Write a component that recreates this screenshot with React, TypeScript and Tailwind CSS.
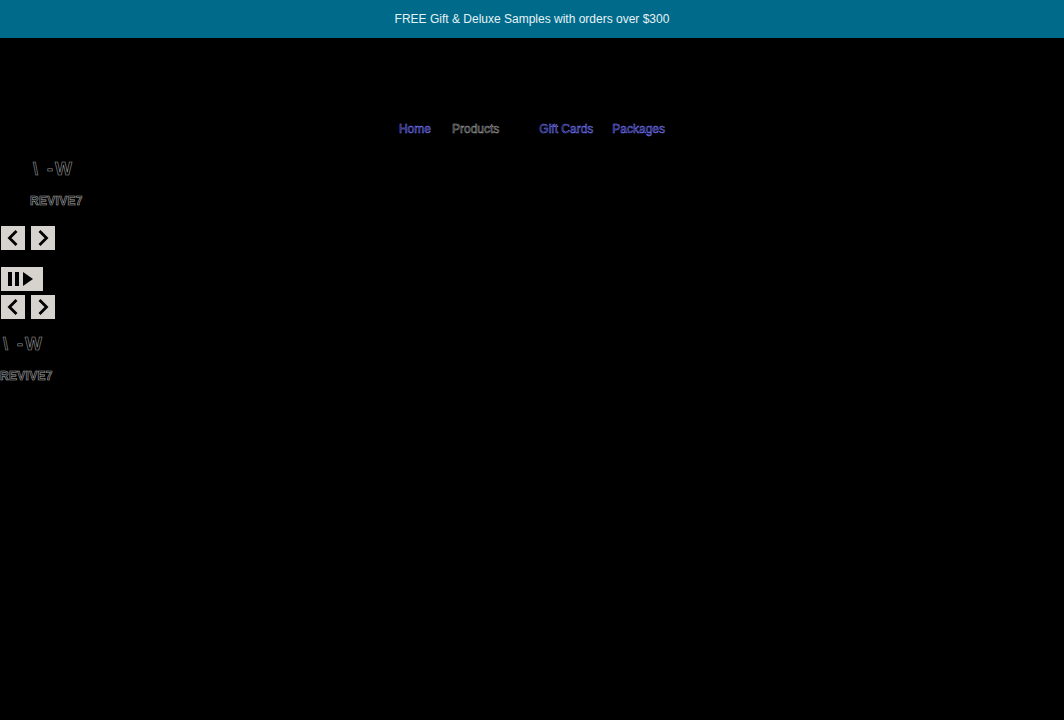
import React from "react";

function ArrowButton({ dir }: { dir: "left" | "right" }) {
  return (
    <button className="flex h-6 w-6 items-center justify-center bg-[#d6d3ce] p-0">
      <svg width="16" height="18" viewBox="0 0 16 18" fill="none">
        {dir === "left" ? (
          <path d="M11.5 2 L4.5 9 L11.5 16" stroke="#000" strokeWidth="2.8" />
        ) : (
          <path d="M4.5 2 L11.5 9 L4.5 16" stroke="#000" strokeWidth="2.8" />
        )}
      </svg>
    </button>
  );
}

function PlayPause() {
  return (
    <button className="flex h-6 w-[42px] items-center justify-center bg-[#d6d3ce] p-0">
      <svg width="38" height="18" viewBox="0 0 38 18">
        <rect x="5" y="2" width="4" height="14" fill="#000" />
        <rect x="12" y="2" width="4" height="14" fill="#000" />
        <path d="M20 2 L30 9 L20 16 Z" fill="#000" />
      </svg>
    </button>
  );
}

function Logo({ shift }: { shift: string }) {
  return (
    <div className={shift}>
      <div className="pl-[3px] font-['Liberation_Sans',sans-serif] text-[18px] font-bold leading-none tracking-[2px] text-transparent [-webkit-text-stroke:0.6px_#9a9a9a]">
        \ -W
      </div>
      <div className="mt-[17px] font-['Liberation_Sans',sans-serif] text-[12px] font-bold leading-none tracking-[0.3px] text-transparent [-webkit-text-stroke:0.6px_#a8a8a8]">
        REVIVE7
      </div>
    </div>
  );
}

export default function App() {
  return (
    <div className="min-h-[720px] w-full bg-black font-['Liberation_Sans',sans-serif]">
      <div className="flex h-[38px] items-center justify-center bg-[#006a8a] text-[12px] text-[#e6f2f6]">
        FREE Gift &amp; Deluxe Samples with orders over $300
      </div>

      <nav className="flex justify-center pt-[84px] text-[12px] leading-[14px]">
        <div className="flex items-center">
          <a className="text-transparent [-webkit-text-stroke:0.5px_#7c7cff]">Home</a>
          <a className="ml-[21px] text-transparent [-webkit-text-stroke:0.5px_#a0a0a0]">Products</a>
          <a className="ml-[40px] text-transparent [-webkit-text-stroke:0.5px_#7c7cff]">Gift Cards</a>
          <a className="ml-[19px] text-transparent [-webkit-text-stroke:0.5px_#7c7cff]">Packages</a>
        </div>
      </nav>

      <div className="pt-[24px]">
        <Logo shift="pl-[30px]" />
        <div className="mt-[19px] flex gap-[6px] pl-[1px]">
          <ArrowButton dir="left" />
          <ArrowButton dir="right" />
        </div>
        <div className="mt-[17px] pl-[1px]">
          <PlayPause />
        </div>
        <div className="mt-[4px] flex gap-[6px] pl-[1px]">
          <ArrowButton dir="left" />
          <ArrowButton dir="right" />
        </div>
        <div className="mt-[16px]">
          <Logo shift="pl-0" />
        </div>
      </div>
    </div>
  );
}
